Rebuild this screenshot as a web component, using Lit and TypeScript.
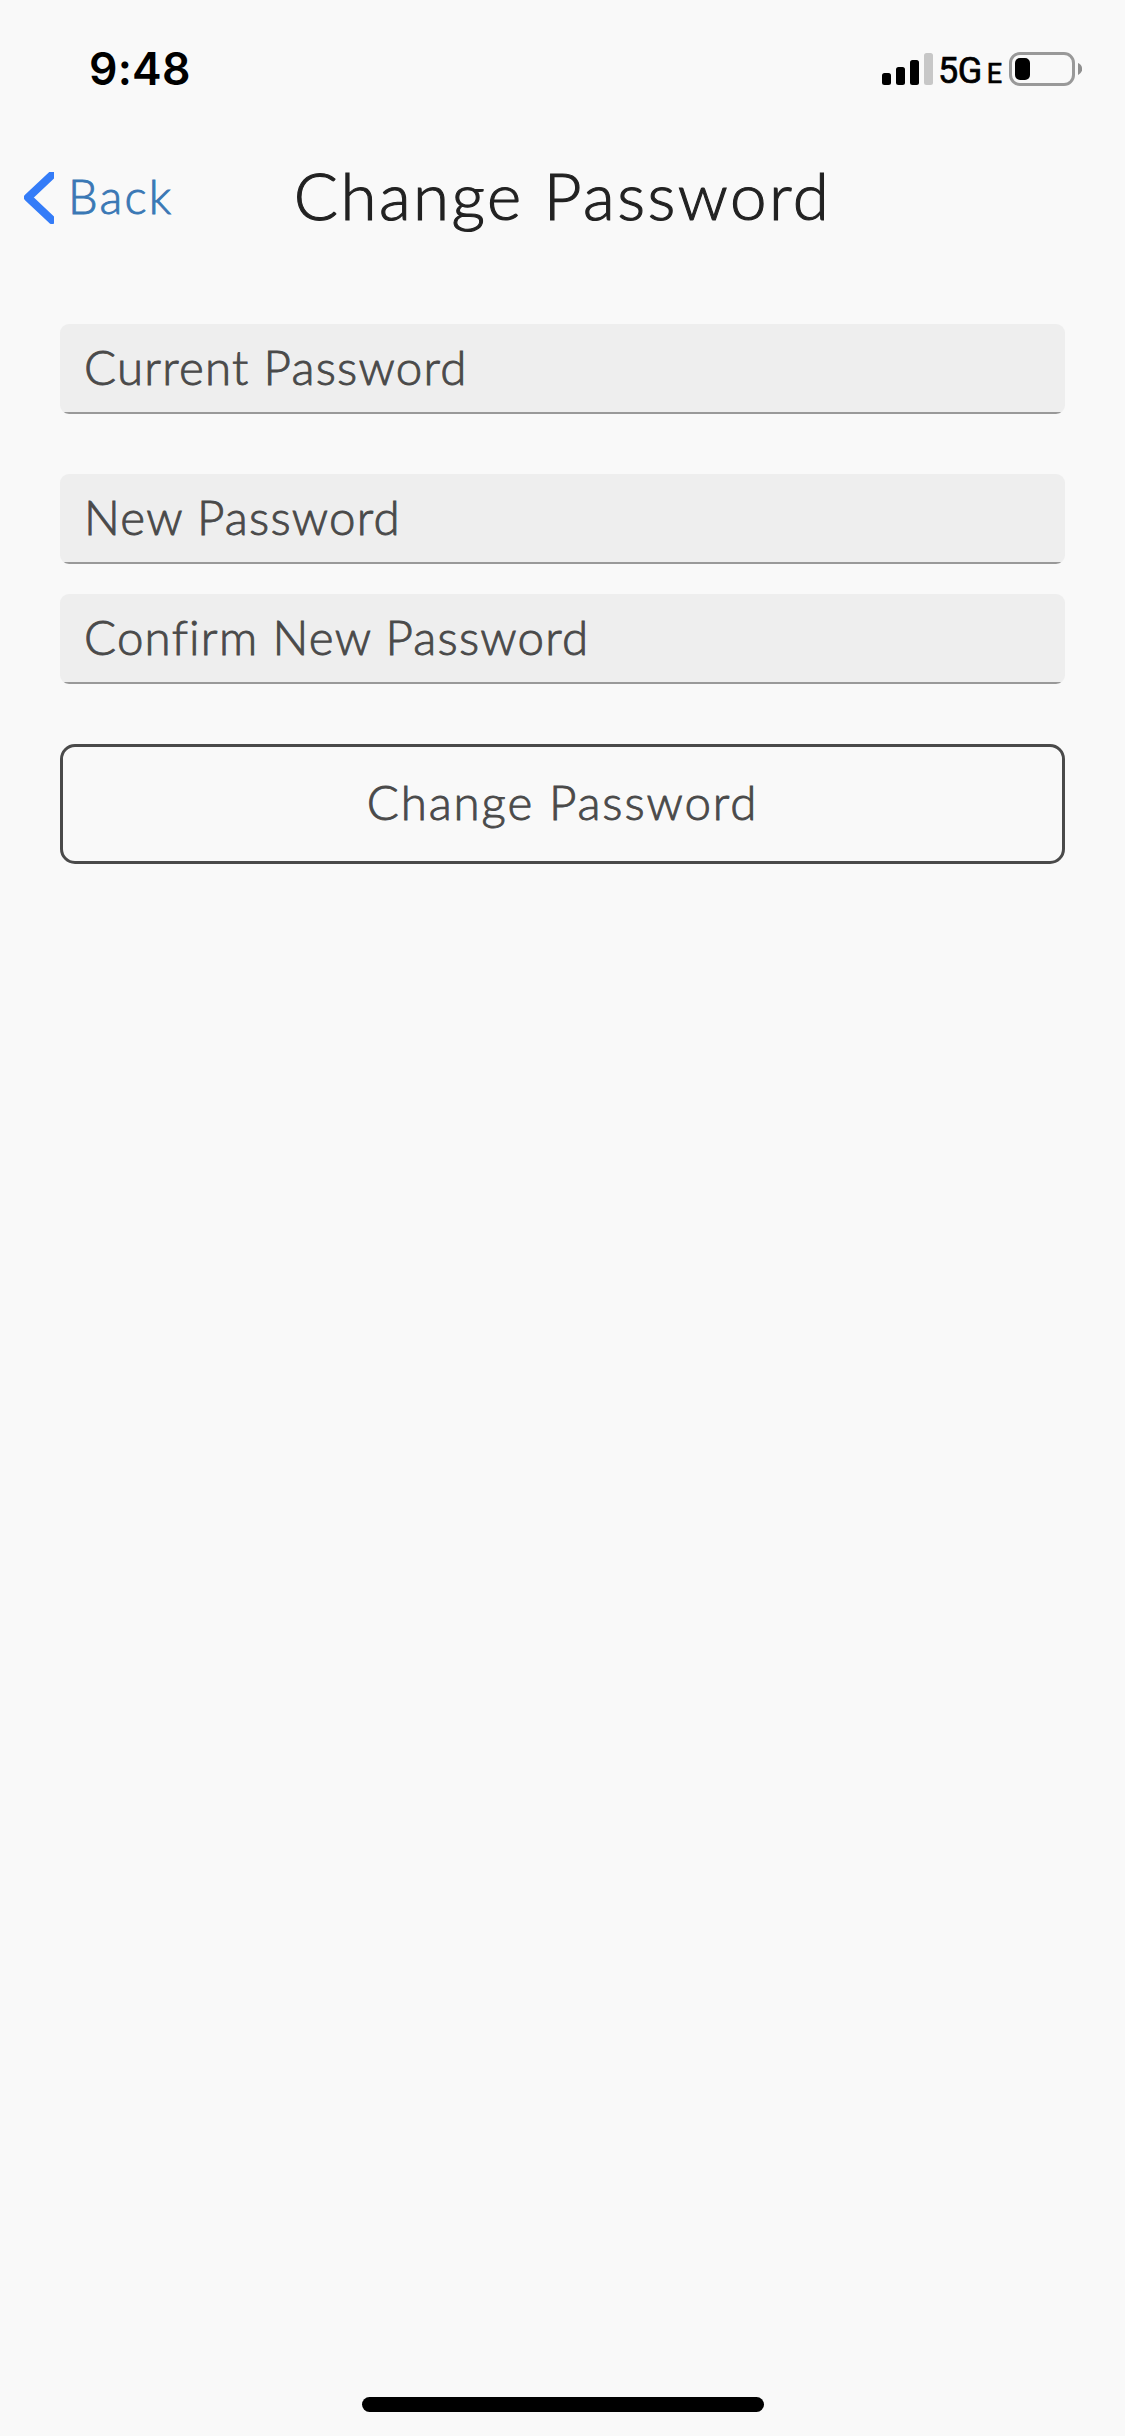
import { LitElement, html, css, svg } from "lit";
import { customElement, property } from "lit/decorators.js";

@customElement("status-bar")
class StatusBar extends LitElement {
  static styles = css`
    :host {
      display: flex;
      justify-content: space-between;
      align-items: flex-start;
      height: 120px;
      padding: 0 43px 0 89px;
      box-sizing: border-box;
      color: #000;
      font-family: Inter, "Liberation Sans", sans-serif;
    }
    .time {
      margin-top: 42px;
      font-size: 44.500px;
      line-height: 54px;
      font-weight: 600;
      letter-spacing: 0.2px;
    }
    .indicators {
      display: flex;
      align-items: flex-start;
      margin-top: 52px;
      height: 36px;
    }
    .network {
      display: flex;
      align-items: baseline;
      width: 75px;
      padding-left: 4px;
      box-sizing: border-box;
      white-space: nowrap;
      font-family: Roboto, sans-serif;
      font-weight: 400;
      font-size: 36px;
      line-height: 39px;
      letter-spacing: -0.5px;
      -webkit-text-stroke: 0.7px #000;
    }
    .suffix {
      margin-left: 5px;
      font-size: 27px;
    }
    svg {
      display: block;
      flex: none;
    }
  `;

  render() {
    const bars = [
      { x: 0, y: 21, fill: "#000" },
      { x: 14, y: 15, fill: "#000" },
      { x: 28, y: 8, fill: "#000" },
      { x: 42, y: 1, fill: "#c7c7c7" },
    ];
    return html`
      <div class="time">9:48</div>
      <div class="indicators">
        <svg width="52" height="36" viewBox="0 0 52 36">
          ${bars.map(
            (b) => svg`<rect x=${b.x} y=${b.y} width="9" height=${33 - b.y} rx="2.5" fill=${b.fill} />`
          )}
        </svg>
        <div class="network"><span>5G</span><span class="suffix">E</span></div>
        <svg width="73" height="36" viewBox="0 0 73 36">
          <rect x="1.5" y="1.5" width="63" height="31" rx="9.5" fill="none" stroke="#999" stroke-width="3" />
          <rect x="6" y="6" width="15" height="22" rx="5" fill="#000" />
          <path d="M69 11c2.600 1.200 4.200 3.400 4.200 6s-1.600 4.800-4.200 6z" fill="#8f8f8f" />
        </svg>
      </div>
    `;
  }
}

@customElement("nav-header")
class NavHeader extends LitElement {
  static styles = css`
    :host {
      display: grid;
      grid-template-columns: 1fr auto 1fr;
      height: 204px;
      font-family: Lato, sans-serif;
      font-weight: 300;
    }
    .back {
      display: flex;
      align-items: flex-start;
      padding-left: 24px;
      color: #3a78b5;
    }
    .chevron {
      display: block;
      margin-top: 52px;
    }
    .label {
      margin: 46px 0 0 14px;
      font-size: 47px;
      line-height: 60px;
      letter-spacing: 2.200px;
      -webkit-text-stroke: 0.9px #3a78b5;
    }
    h1 {
      margin: 35px 0 0;
      font-size: 65.500px;
      line-height: 80px;
      font-weight: 300;
      letter-spacing: 2.450px;
      color: #222;
      white-space: nowrap;
      -webkit-text-stroke: 1.1px #222;
    }
  `;

  render() {
    return html`
      <div class="back">
        <svg class="chevron" width="30" height="52" viewBox="0 0 30 52">
          <path d="M28 3L4 25.500L28 48" fill="none" stroke="#347cf8" stroke-width="8" stroke-linecap="round" stroke-linejoin="round" />
        </svg>
        <span class="label">Back</span>
      </div>
      <h1>Change Password</h1>
      <div></div>
    `;
  }
}

@customElement("password-field")
class PasswordField extends LitElement {
  @property() label = "";

  static styles = css`
    :host {
      display: block;
      height: 90px;
      box-sizing: border-box;
      padding: 13px 24px 0;
      overflow: hidden;
      border-radius: 9px;
      background: linear-gradient(#999, #999) bottom / 100% 2px no-repeat #eee;
      color: #4a4a4a;
      font-family: Lato, sans-serif;
      font-weight: 300;
      font-size: 47.500px;
      line-height: 60px;
      letter-spacing: 1.230px;
      white-space: nowrap;
      -webkit-text-stroke: 0.9px #4a4a4a;
    }
  `;

  render() {
    return html`<span>${this.label}</span>`;
  }
}

@customElement("app-root")
class AppRoot extends LitElement {
  static styles = css`
    :host {
      display: flex;
      flex-direction: column;
      width: 1125px;
      height: 2436px;
      background: #f9f9f9;
    }
    .form {
      display: flex;
      flex-direction: column;
      padding: 0 60px;
      flex: 1;
    }
    .group {
      display: flex;
      flex-direction: column;
      gap: 30px;
      margin: 60px 0;
    }
    .submit {
      height: 120px;
      padding: 0 0 4px;
      box-sizing: border-box;
      border: 3px solid #4a4a4a;
      border-radius: 15px;
      background: none;
      color: #4a4a4a;
      font-family: Lato, sans-serif;
      font-weight: 300;
      font-size: 47.500px;
      line-height: 60px;
      letter-spacing: 1.900px;
      -webkit-text-stroke: 0.9px #4a4a4a;
    }
    .home {
      width: 402px;
      height: 15px;
      margin: 0 auto 24px 362px;
      border-radius: 8px;
      background: #000;
    }
  `;

  render() {
    return html`
      <status-bar></status-bar>
      <nav-header></nav-header>
      <div class="form">
        <password-field label="Current Password"></password-field>
        <div class="group">
          <password-field label="New Password"></password-field>
          <password-field label="Confirm New Password"></password-field>
        </div>
        <button class="submit">Change Password</button>
      </div>
      <div class="home"></div>
    `;
  }
}
